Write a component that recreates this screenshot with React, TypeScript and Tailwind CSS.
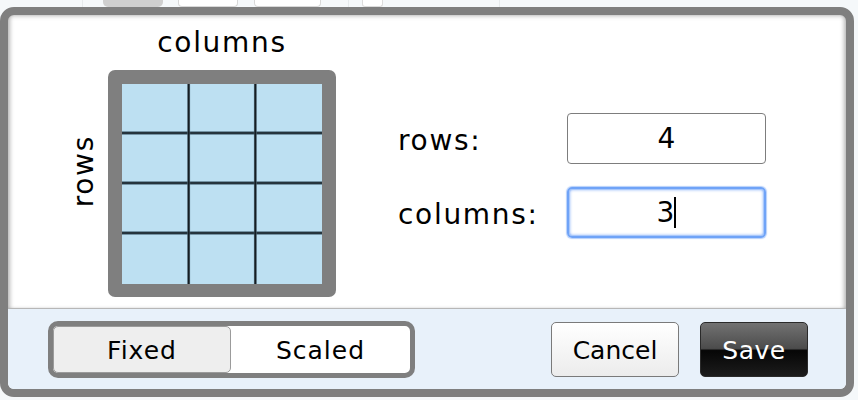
import React from 'react';

const GridPreview: React.FC<{ rows: number; cols: number }> = ({ rows, cols }) => {
  const xs = Array.from({ length: cols - 1 }, (_, i) => ((i + 1) * 200) / cols);
  const ys = Array.from({ length: rows - 1 }, (_, i) => ((i + 1) * 200) / rows - 1);
  return (
    <div className="w-[228px] h-[227px] rounded-[7px] bg-[#7f7f7f] p-[14px] pb-[13px]">
      <svg width="200" height="200" viewBox="0 0 200 200" className="block">
        <rect width="200" height="200" fill="#bde0f2" />
        {ys.map(y => (
          <g key={'h' + y}>
            <rect x="0" y={y - 2} width="200" height="4" fill="#5f7c8c" opacity="0.75" />
            <rect x="0" y={y - 1} width="200" height="2" fill="#26343d" />
          </g>
        ))}
        {xs.map(x => (
          <g key={'v' + x}>
            <rect x={x - 1.5} y="0" width="3" height="200" fill="#6b8797" opacity="0.7" />
            <rect x={x - 1} y="0" width="2" height="200" fill="#151d22" />
          </g>
        ))}
      </svg>
    </div>
  );
};

export default function App() {
  return (
    <div className="relative w-[858px] h-[400px] overflow-hidden bg-[#f5f8fa] font-['DejaVu_Sans',sans-serif] text-black">
      {/* page behind the dialog */}
      <div className="flex h-[7px] items-stretch">
        <div className="ml-[82px] w-px bg-[#e6eaec]" />
        <div className="ml-[20px] w-[60px] rounded-b-[5px] bg-[#cfcfcf]" />
        <div className="ml-[15px] w-[60px] rounded-b-[4px] border border-t-0 border-[#d8d8d8] bg-white" />
        <div className="ml-[16px] w-[67px] rounded-b-[4px] border border-t-0 border-[#d8d8d8] bg-white" />
        <div className="ml-[27px] w-px bg-[#e6eaec]" />
        <div className="ml-[13px] w-[21px] rounded-b-[3px] border border-t-0 border-[#dcdcdc] bg-white" />
        <div className="ml-[116px] w-px bg-[#e6eaec]" />
      </div>

      {/* dialog */}
      <div className="absolute left-0 top-[7px] w-[854px] h-[390px] rounded-[14px] border-[8px] border-[#7f7f7f] bg-white overflow-hidden flex flex-col">
        <div className="h-[293px] flex shadow-[inset_4px_0_4px_-2px_rgba(0,0,0,0.28),inset_-4px_0_4px_-2px_rgba(0,0,0,0.28),inset_0_4px_4px_-2px_rgba(0,0,0,0.15)]">
          <div className="pl-[57px] pt-[11px] grid grid-cols-[40px_228px] gap-x-[3px] content-start">
            <div />
            <div className="h-[34px] leading-[34px] text-center text-[28px] tracking-[1.7px] mb-[10px]">columns</div>
            <div className="flex justify-center">
              <span className="mt-[65px] -ml-[3px] h-fit text-[28px] leading-[34px] tracking-[1.7px] [writing-mode:vertical-rl] rotate-180">
                rows
              </span>
            </div>
            <GridPreview rows={4} cols={3} />
          </div>

          <div className="ml-[62px] mt-[98px] flex flex-col gap-[23px]">
            <div className="flex items-center h-[51px]">
              <span className="w-[169px] text-[28px] tracking-[1.7px] pt-[4px]">rows:</span>
              <div className="w-[199px] h-[51px] rounded-[4px] border border-[#7d7d7d] flex items-center justify-center text-[28px]">
                4
              </div>
            </div>
            <div className="flex items-center h-[51px]">
              <span className="w-[169px] text-[28px] tracking-[1.7px] pt-[4px]">columns:</span>
              <div className="w-[199px] h-[51px] rounded-[5px] border-[2px] border-[#6fa3f7] shadow-[inset_0_0_0_1px_#a9c8fb,inset_0_0_3px_1px_rgba(140,180,250,0.9),0_0_1px_1px_rgba(120,168,248,0.55)] flex items-center justify-center text-[28px]">
                <span>3</span>
                <span className="w-[2px] h-[31px] bg-black" />
              </div>
            </div>
          </div>
        </div>

        <div className="h-px bg-[#b7b7b7]" />

        <div className="h-[80px] bg-[#e8f1fa] flex items-center pl-[40px] pr-[38px]">
          <div className="w-[367px] h-[57px] rounded-[10px] border-[5px] border-[#7f7f7f] bg-white flex text-[25px] tracking-[1px]">
            <div className="w-[178px] h-full pt-[3px] rounded-[5px] border border-[#9b9b9b] bg-[#eeeeee] flex items-center justify-center">
              Fixed
            </div>
            <div className="flex-1 pt-[3px] flex items-center justify-center">Scaled</div>
          </div>

          <button className="ml-auto w-[128px] h-[55px] pt-[3px] rounded-[5px] border border-[#7a7a7a] bg-[linear-gradient(to_bottom,#ffffff,#ececec)] text-[25px]">
            Cancel
          </button>
          <button className="ml-[21px] w-[108px] h-[55px] pt-[3px] rounded-[5px] border border-[#2a2a2a] bg-[linear-gradient(to_bottom,#727272_0%,#4c4c4c_48%,#060606_52%,#1c1c1c_100%)] text-white text-[25px] tracking-[0.5px]">
            Save
          </button>
        </div>
      </div>
    </div>
  );
}
